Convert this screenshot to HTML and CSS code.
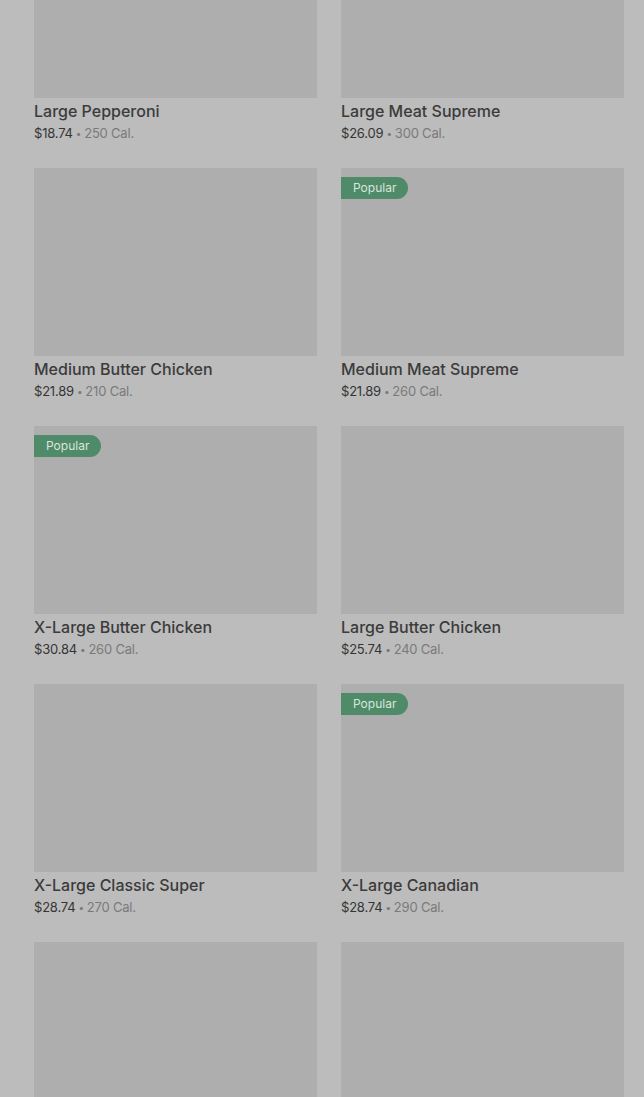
FILE: index.html
```html
<!DOCTYPE html>
<html lang="en">
<head>
  <meta charset="UTF-8">
  <title>Menu</title>
  <link rel="stylesheet" href="styles.css">
</head>
<body>

<div class="menu-grid">
  <div class="item">
    <div class="item-img"></div>
    <h3>Large Pepperoni</h3>
    <p class="meta">$18.74<span class="dot">•</span><span>250 Cal.</span></p>
  </div>
  <div class="item">
    <div class="item-img"></div>
    <h3>Large Meat Supreme</h3>
    <p class="meta">$26.09<span class="dot">•</span><span>300 Cal.</span></p>
  </div>

  <div class="item">
    <div class="item-img"></div>
    <h3>Medium Butter Chicken</h3>
    <p class="meta">$21.89<span class="dot">•</span><span>210 Cal.</span></p>
  </div>
  <div class="item">
    <div class="item-img"><span class="badge">Popular</span></div>
    <h3>Medium Meat Supreme</h3>
    <p class="meta">$21.89<span class="dot">•</span><span>260 Cal.</span></p>
  </div>

  <div class="item">
    <div class="item-img"><span class="badge">Popular</span></div>
    <h3>X-Large Butter Chicken</h3>
    <p class="meta">$30.84<span class="dot">•</span><span>260 Cal.</span></p>
  </div>
  <div class="item">
    <div class="item-img"></div>
    <h3>Large Butter Chicken</h3>
    <p class="meta">$25.74<span class="dot">•</span><span>240 Cal.</span></p>
  </div>

  <div class="item">
    <div class="item-img"></div>
    <h3>X-Large Classic Super</h3>
    <p class="meta">$28.74<span class="dot">•</span><span>270 Cal.</span></p>
  </div>
  <div class="item">
    <div class="item-img"><span class="badge">Popular</span></div>
    <h3>X-Large Canadian</h3>
    <p class="meta">$28.74<span class="dot">•</span><span>290 Cal.</span></p>
  </div>

  <div class="item">
    <div class="item-img"></div>
  </div>
  <div class="item">
    <div class="item-img"></div>
  </div>
</div>

</body>
</html>
```

FILE: styles.css
```css
body {
  font-family: Inter, Roboto, "Liberation Sans", sans-serif;
  background: #bcbcbc;
  margin: 0;
  padding: 0 20px 0 34px;
  height: 1097px;
  overflow: hidden;
}

.menu-grid {
  display: grid;
  grid-template-columns: 1fr 1fr;
  column-gap: 24px;
  row-gap: 26px;
  margin-top: -90px;
}

.item-img {
  position: relative;
  height: 188px;
  background: #aeaeae;
}

.badge {
  position: absolute;
  top: 9px;
  left: 0;
  height: 22px;
  line-height: 22px;
  padding: 0 12px;
  background: #4f8a69;
  color: #d9e6dd;
  font-size: 12px;
  border-radius: 0 11px 11px 0;
}

.item h3 {
  margin: 3px 0 0;
  font-size: 16px;
  line-height: 20px;
  font-weight: 500;
  color: #3b3b3b;
}

.meta {
  margin: 3px 0 0;
  height: 18px;
  font-size: 13px;
  line-height: 18px;
  color: #353535;
  letter-spacing: -0.2px;
}

.meta span {
  color: #7a7a7a;
}

.meta .dot {
  font-size: 10px;
  line-height: 1;
  vertical-align: 1px;
  margin: 0 3px;
}
```
